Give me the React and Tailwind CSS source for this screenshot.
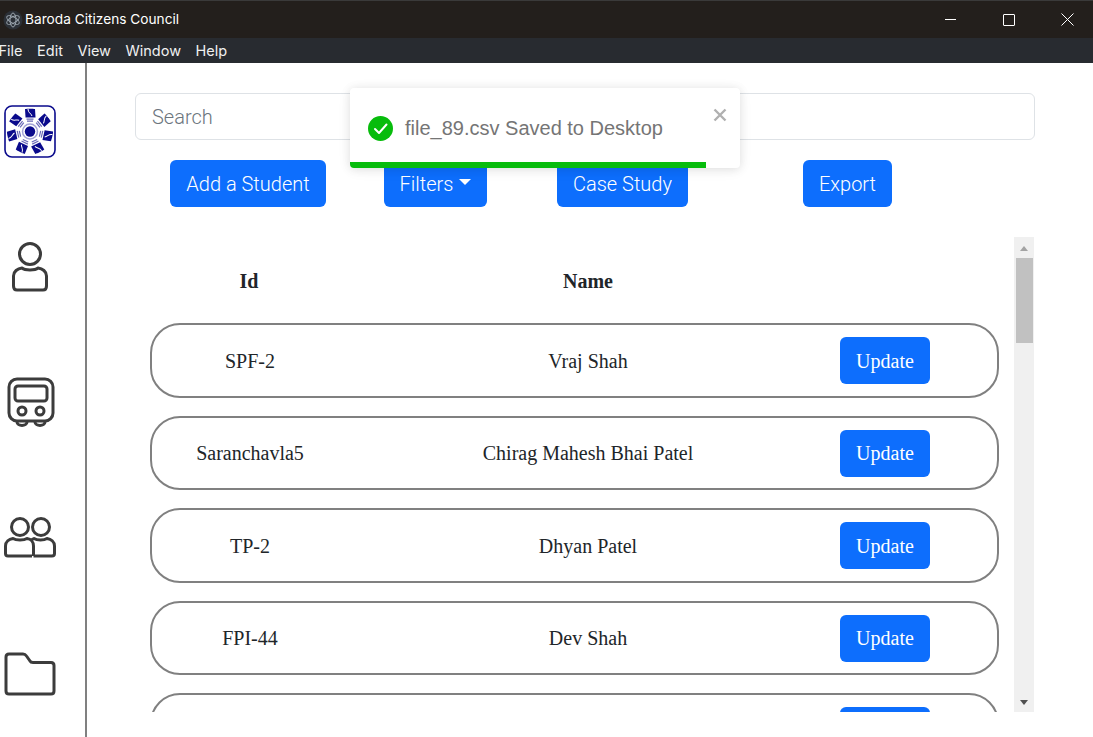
import React from "react";

const sans = "font-['Roboto','Liberation_Sans',sans-serif]";
const serif = "font-['Liberation_Serif',serif]";

const rows = [
  ["SPF-2", "Vraj Shah"],
  ["Saranchavla5", "Chirag Mahesh Bhai Patel"],
  ["TP-2", "Dhyan Patel"],
  ["FPI-44", "Dev Shah"],
  ["", ""],
];

function Logo() {
  const blades = [0, 51.4, 102.8, 154.2, 205.7, 257.1, 308.5];
  return (
    <svg width="52" height="53" viewBox="0 0 52 53" className="block">
      <rect x="1" y="1" width="50" height="51" rx="7" fill="#fff" stroke="#0a0a8c" strokeWidth="1.6" />
      {blades.map((a) => (
        <g key={a} transform={`rotate(${a} 26 26.5)`}>
          <path d="M21 4 C23 3.5 29 3.5 31 4 L31.5 12.5 L21.5 12.5 Z" fill="#0a0a8c" />
          <path d="M24 4 C24 8 27 8 28 11" fill="none" stroke="#fff" strokeWidth="1" />
          <path d="M22.5 14.2 H29.5 M23 16.2 H29" stroke="#6a6ab8" strokeWidth="1.2" />
        </g>
      ))}
      <circle cx="26" cy="26.5" r="7.5" fill="none" stroke="#a4a4d6" strokeWidth="1.5" />
      <circle cx="26" cy="26.5" r="5.2" fill="#0a0a8c" />
    </svg>
  );
}

function Person() {
  return (
    <svg width="38" height="50" viewBox="0 0 38 50" fill="none" stroke="#3c3c3c" strokeWidth="3" strokeLinejoin="round">
      <circle cx="19" cy="12" r="10.5" />
      <path d="M11 26 C14 28.5 24 28.5 27 26 C31.5 26.5 35.5 29.5 35.5 34 V44 C35.5 46.5 34 48 32 48 H6 C4 48 2.5 46.5 2.5 44 V34 C2.5 29.5 6.5 26.5 11 26 Z" />
    </svg>
  );
}

function Bus() {
  return (
    <svg width="48" height="50" viewBox="0 0 48 50" fill="none" stroke="#3c3c3c" strokeWidth="3">
      <rect x="2" y="2" width="44" height="42" rx="8" />
      <rect x="8" y="9" width="32" height="15" rx="3" />
      <circle cx="15" cy="34" r="4" />
      <circle cx="33" cy="34" r="4" />
      <path d="M10 45 C10 49.5 20 49.5 20 45 M28 45 C28 49.5 38 49.5 38 45" />
    </svg>
  );
}

function People() {
  return (
    <svg width="52" height="44" viewBox="0 0 52 44" fill="none" stroke="#3c3c3c" strokeWidth="3" strokeLinejoin="round">
      <circle cx="16" cy="11" r="8.5" />
      <circle cx="37" cy="11" r="8.5" />
      <path d="M28 40 H4 C2.5 40 1.5 39 1.5 37.5 V30 C1.5 25.5 5 23 9 22.5 C12 24.5 20 24.5 23 22.5 C27 23 29.5 26 29.5 30 V40" />
      <path d="M29.5 40 H48 C49.5 40 50.5 39 50.5 37.5 V30 C50.5 25.5 47 23 43 22.5 C40 24.5 33 24.5 30 22.5 L27 24" />
    </svg>
  );
}

function Folder() {
  return (
    <svg width="52" height="44" viewBox="0 0 52 44" fill="none" stroke="#3c3c3c" strokeWidth="3" strokeLinejoin="round">
      <path d="M2 5 C2 3 3 2 5 2 H19 C20.5 2 21.5 2.5 22.5 4 L26 9 C26.5 10 27.5 10.5 29 10.5 H47 C49 10.5 50 11.5 50 13.5 V39 C50 41 49 42 47 42 H5 C3 42 2 41 2 39 Z" />
    </svg>
  );
}

function Btn({ children, className = "" }) {
  return (
    <button className={`h-[47px] bg-[#0d6efd] rounded-[6px] text-white text-[20px] ${sans} font-light flex items-center justify-center ${className}`}>
      {children}
    </button>
  );
}

export default function App() {
  return (
    <div className="w-[1093px] h-[737px] overflow-hidden bg-white flex flex-col relative">
      <div className="h-[38px] bg-[#231f1c] border-t border-[#3a3a3a] flex items-center text-white text-[13.7px] font-['Inter','Noto_Sans',sans-serif]">
        <div className="w-[25px] flex justify-center">
          <svg width="20" height="20" viewBox="0 0 20 20" fill="none" stroke="#9aa4ad" strokeWidth="1">
            <circle cx="10" cy="10" r="9.5" fill="#2b3037" stroke="none" />
            <ellipse cx="10" cy="10" rx="7" ry="3" transform="rotate(30 10 10)" />
            <ellipse cx="10" cy="10" rx="7" ry="3" transform="rotate(90 10 10)" />
            <ellipse cx="10" cy="10" rx="7" ry="3" transform="rotate(150 10 10)" />
          </svg>
        </div>
        <span>Baroda Citizens Council</span>
        <div className="ml-auto flex items-center">
          <div className="w-[54px] flex justify-center"><div className="w-[11px] h-px bg-white" /></div>
          <div className="w-[64px] flex justify-center"><div className="w-[12px] h-[12px] border border-white rounded-[1px]" /></div>
          <div className="w-[52px] flex justify-center">
            <svg width="13" height="13" viewBox="0 0 13 13" stroke="#fff" strokeWidth="1"><path d="M0.5 0.5 L12.5 12.5 M12.5 0.5 L0.5 12.5" /></svg>
          </div>
        </div>
      </div>
      <div className="h-[25px] bg-[#282b30] flex items-center gap-[14.5px] text-[#f0f0f0] text-[14.5px] font-['Inter','Noto_Sans',sans-serif] -ml-[1.5px]">
        <span>File</span><span>Edit</span><span>View</span><span>Window</span><span>Help</span>
      </div>

      <div className="flex-1 flex min-h-0">
        <div className="w-[87px] shrink-0 border-r-2 border-[#808080] flex flex-col items-center pr-[25px]">
          <div className="mt-[42px]"><Logo /></div>
          <div className="mt-[84px]"><Person /></div>
          <div className="mt-[85px] ml-[1px]"><Bus /></div>
          <div className="mt-[89px]"><People /></div>
          <div className="mt-[92px]"><Folder /></div>
        </div>

        <div className="flex-1 min-w-0 pl-[48px] pr-[58px] pt-[30px] flex flex-col">
          <div className={`h-[47px] border border-[#dee2e6] rounded-[6px] flex items-center pl-[16px] text-[20px] font-light text-[#6c757d] ${sans}`}>Search</div>
          <div className="flex mt-[20px]">
            <Btn className="w-[156px] ml-[35px]">Add a Student</Btn>
            <Btn className="w-[103px] ml-[58px]">
              Filters
              <span className="ml-[6px] mb-[4px] w-0 h-0 border-x-[6px] border-x-transparent border-t-[6px] border-t-white" />
            </Btn>
            <Btn className="w-[131px] ml-[70px]">Case Study</Btn>
            <Btn className="w-[89px] ml-[115px]">Export</Btn>
          </div>

          <div className="mt-[30px] h-[475px] flex min-h-0 overflow-hidden">
            <div className="w-[880px] shrink-0 overflow-hidden pl-[15px] pr-[16px]">
              <div className={`flex items-center h-[86.4px] pt-[1px] text-[20px] font-bold text-[#212529] ${serif}`}>
                <div className="w-[198px] text-center">Id</div>
                <div className="w-[480px] text-center">Name</div>
              </div>
              <div className="flex flex-col gap-[18px]">
                {rows.map(([id, name], i) => (
                  <div key={i} className={`shrink-0 h-[74.5px] border-2 border-[#808080] rounded-[30px] flex items-center text-[20px] text-[#212529] ${serif}`}>
                    <div className="w-[196px] text-center">{id}</div>
                    <div className="w-[480px] text-center">{name}</div>
                    <button className="w-[90px] h-[47px] ml-[12px] bg-[#0d6efd] rounded-[6px] text-white text-[20px] flex items-center justify-center shrink-0">Update</button>
                  </div>
                ))}
              </div>
            </div>
            <div className="w-[20px] h-full bg-[#f0f0f0] -ml-px relative shrink-0 flex flex-col items-center">
              <div className="mt-[9px] w-0 h-0 border-x-[4px] border-x-transparent border-b-[5px] border-b-[#a3a3a3]" />
              <div className="mt-[7px] w-[17px] h-[85px] bg-[#c1c1c1]" />
              <div className="mt-auto mb-[7px] w-0 h-0 border-x-[4px] border-x-transparent border-t-[5px] border-t-[#505050]" />
            </div>
          </div>
        </div>
      </div>

      <div className={`absolute left-[350px] top-[88px] w-[390px] h-[80px] bg-white rounded-[4px] shadow-[0_1px_10px_0_rgba(0,0,0,0.1),0_2px_15px_0_rgba(0,0,0,0.05)] overflow-hidden font-['Liberation_Sans',sans-serif]`}>
        <div className="flex items-center pl-[18px] h-[80px] pb-[0px]">
          <svg width="25" height="25" viewBox="0 0 25 25">
            <circle cx="12.5" cy="12.5" r="12.5" fill="#07bc0c" />
            <path d="M7 13 L11 17 L18.5 8.5" fill="none" stroke="#fff" strokeWidth="2" strokeLinecap="round" strokeLinejoin="round" />
          </svg>
          <span className="ml-[12px] text-[20px] text-[#757575]">file_89.csv Saved to Desktop</span>
        </div>
        <div className="absolute left-[363px] top-[20px]">
          <svg width="14" height="14" viewBox="0 0 14 14" stroke="#b0b0b0" strokeWidth="2.4"><path d="M1.5 1.5 L12.5 12.5 M12.5 1.5 L1.5 12.5" /></svg>
        </div>
        <div className="absolute left-0 bottom-0 w-[356px] h-[6px] bg-[#07bc0c]" />
      </div>
    </div>
  );
}
